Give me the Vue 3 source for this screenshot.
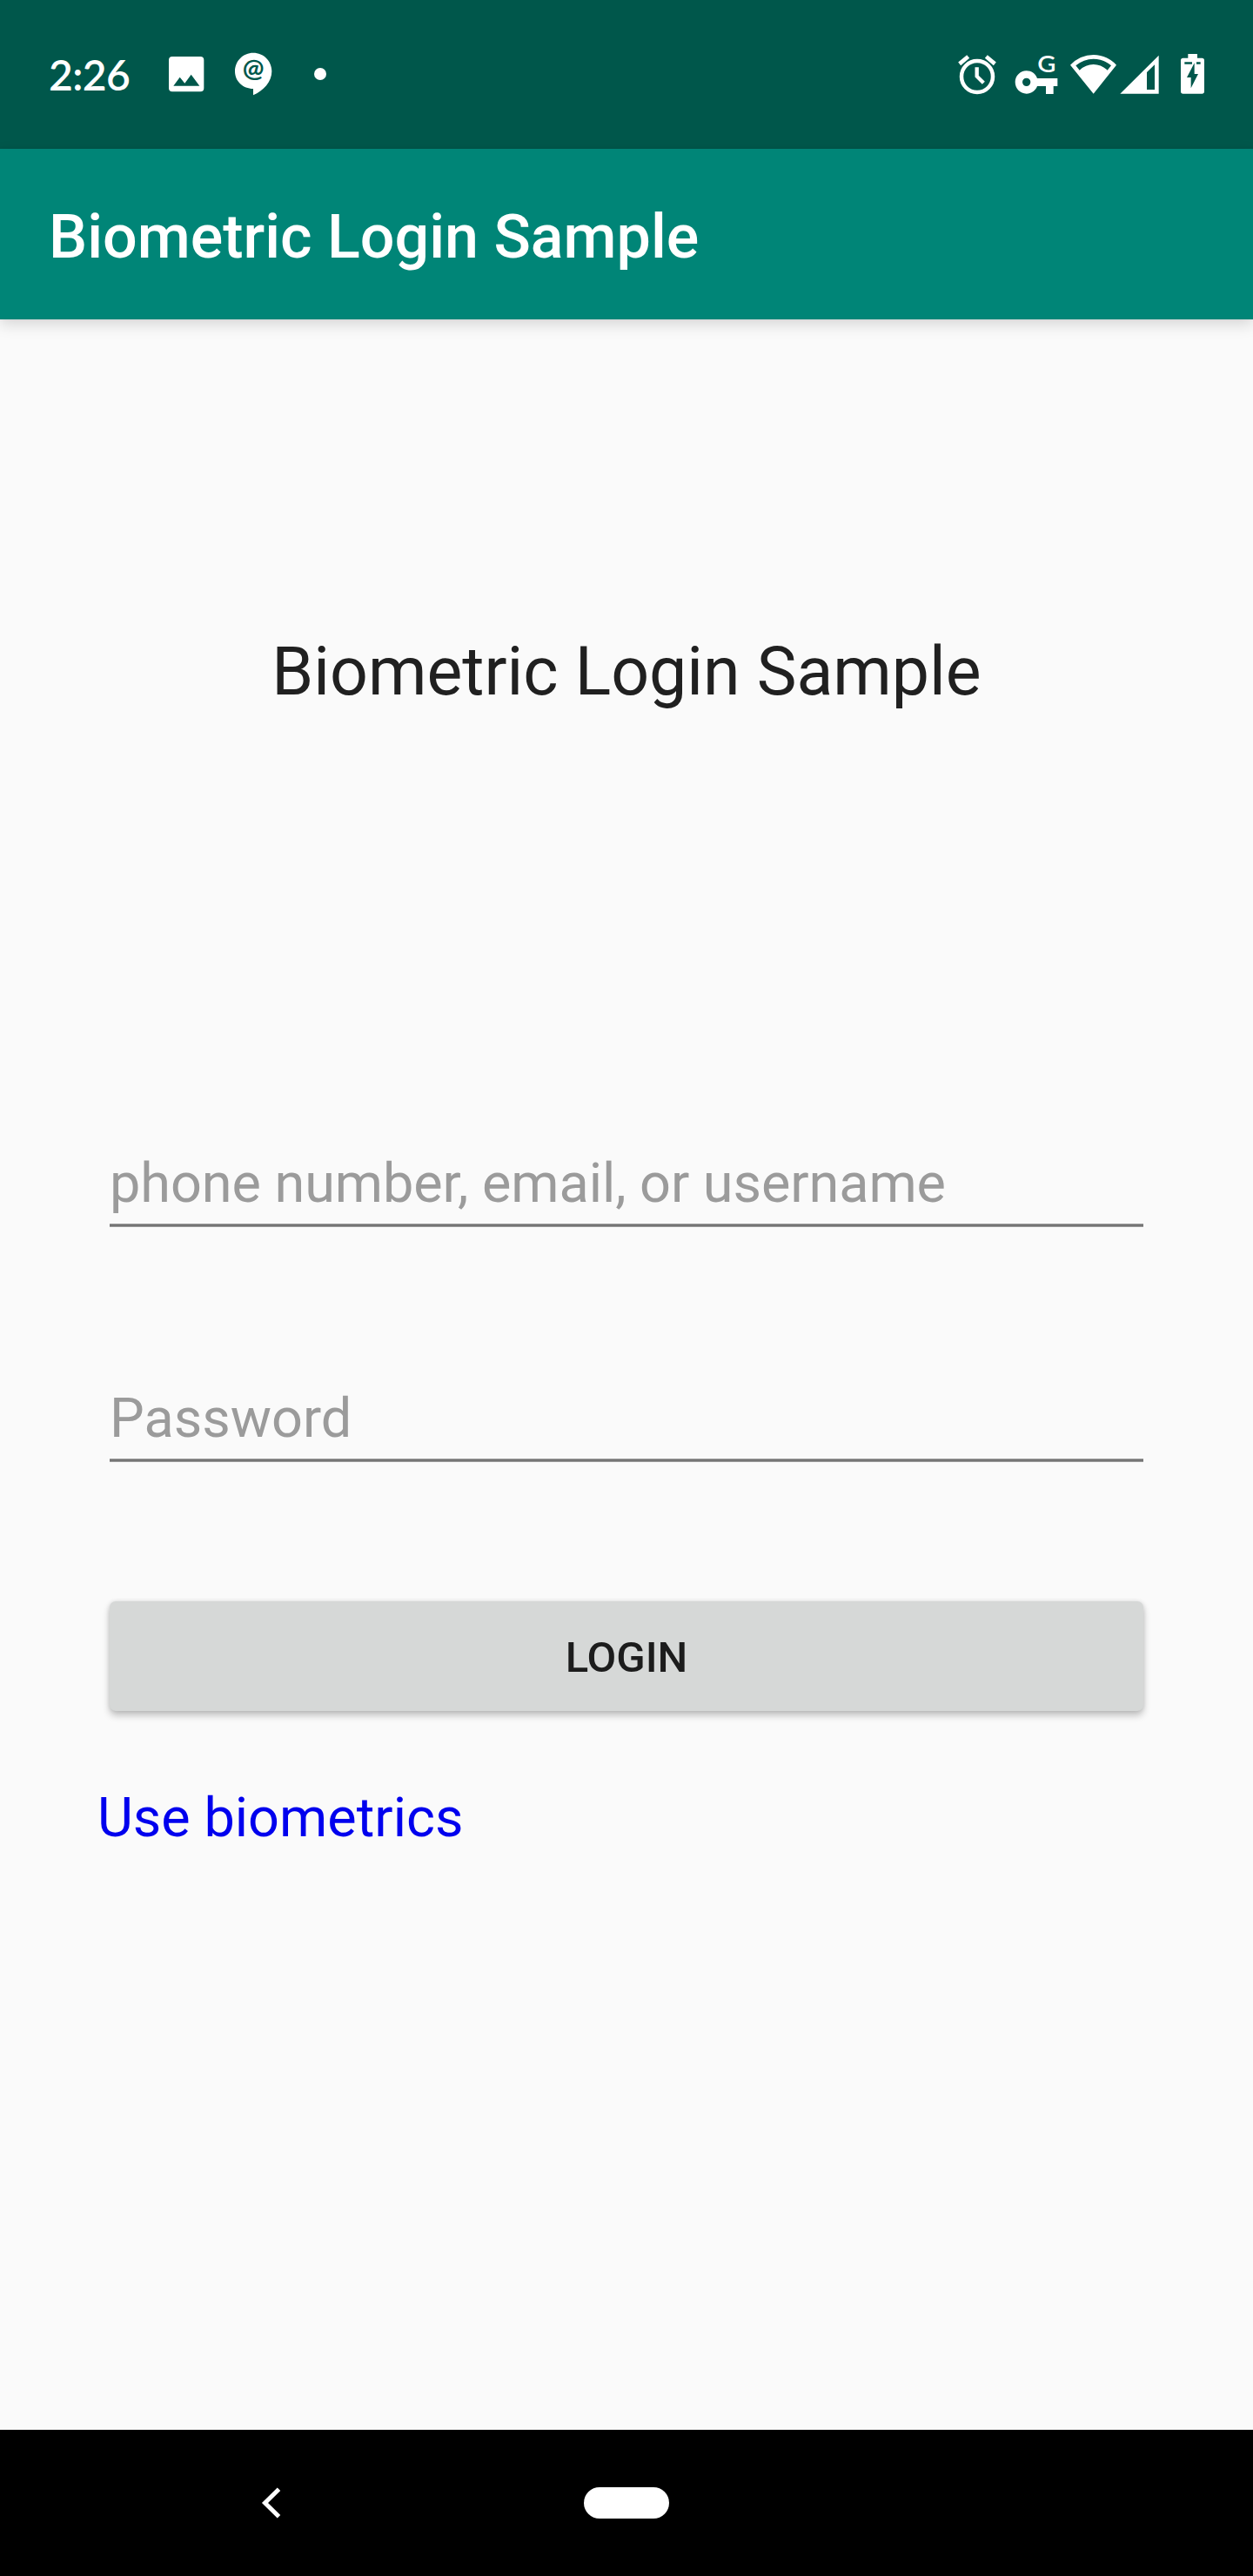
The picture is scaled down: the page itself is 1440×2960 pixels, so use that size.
<script setup>
import { ref } from 'vue'

const username = ref('')
const password = ref('')
</script>

<template>
  <div class="screen">
    <header class="status">
      <div class="left">
        <span class="clock">2:26</span>
        <svg class="photo" width="41" height="41" viewBox="462 75 123 123">
          <path fill="#fff" fill-rule="evenodd" d="M474 75H571Q583 75 583 87V184Q583 196 571 196H474Q462 196 462 184V87Q462 75 474 75ZM478 176H568L539 137L517 167L500 146Z" />
        </svg>
        <svg class="chat" width="44" height="50" viewBox="688 61 132 150">
          <path fill="#fff" d="M754 63C790 63 818 91 818 127C818 162 790 194 754 209V187C719 187 691 161 691 127C691 91 719 63 754 63Z" />
          <text class="at" x="754.5" y="147" text-anchor="middle">@</text>
        </svg>
        <i class="dot"></i>
      </div>
      <div class="right">
        <svg width="290" height="70" viewBox="60 0 870 210">
          <g fill="none" stroke="#fff">
            <circle cx="129" cy="144" r="54" stroke-width="13.5" />
            <path stroke-width="14" d="M68 100L98 75M160 75L190 100" />
            <path stroke-width="13" d="M128 112V143L151 166" />
          </g>
          <path fill="#fff" fill-rule="evenodd" d="M299 124C316 124 330 134 336 150H406V177H392V204H366V177H336C330 193 316 203 299 203C277 203 260 185 260 163C260 142 277 124 299 124ZM299 149A14 14 0 1 0 299 177A14 14 0 1 0 299 149Z" />
          <text class="g" transform="translate(368.5 128) scale(1.05 1)" text-anchor="middle">G</text>
          <path fill="#fff" fill-rule="evenodd" d="M450 104Q484 69 530 69Q575 69 609 104L530 203ZM469 106L482 122Q503 102 530 102Q557 102 578 122L591 106Q563 83 530 83Q496 83 469 106Z" />
          <path fill="#fff" fill-rule="evenodd" d="M622 203L755 71V203ZM714 129V189H741V103Z" />
          <path fill="#fff" fill-rule="evenodd" d="M856 66H888V80H904Q912 80 912 88V195Q912 203 904 203H839Q831 203 831 195V88Q831 80 839 80H856ZM844 94V101H870V94ZM885 94V101H899V94ZM878 97L852 147H866V184L891 135H878Z" />
        </svg>
      </div>
    </header>

    <div class="appbar">Biometric Login Sample</div>

    <main class="content">
      <h1>Biometric Login Sample</h1>
      <form class="form" @submit.prevent>
        <input v-model="username" class="user" type="text" placeholder="phone number, email, or username" />
        <input v-model="password" type="password" placeholder="Password" />
        <button type="submit">LOGIN</button>
      </form>
      <a class="link">Use biometrics</a>
    </main>

    <nav class="navbar">
      <svg class="back" width="24" height="38" viewBox="0 0 24 38">
        <path d="M20.5 3.2L4.5 19L20.5 34.8" fill="none" stroke="#fff" stroke-width="5" />
      </svg>
      <i class="home"></i>
    </nav>
  </div>
</template>

<style>
body {
  margin: 0;
  background: #fafafa;
}
</style>

<style scoped>
.screen {
  width: 1440px;
  height: 2960px;
  display: flex;
  flex-direction: column;
  background: #fafafa;
  font-family: Roboto, sans-serif;
  overflow: hidden;
}
svg {
  display: block;
  flex: none;
  overflow: visible;
}
.status {
  height: 171px;
  flex: none;
  box-sizing: border-box;
  display: flex;
  justify-content: space-between;
  padding: 40px 50px 0 56px;
  background: #00574b;
  color: #fff;
}
.left,
.right {
  display: flex;
}
.left {
  padding-top: 20px;
}
.clock {
  width: 138px;
  font: 600 48px/51px Lato, sans-serif;
  letter-spacing: -0.6px;
}
.photo {
  margin-top: 5px;
}
.chat {
  margin-left: 34px;
}
.at {
  font: 700 88px Lato, sans-serif;
  fill: #00574b;
}
.g {
  font: 600 83px Lato, sans-serif;
  fill: #fff;
}
.dot {
  width: 14px;
  height: 14px;
  margin: 18px 0 0 48px;
  border-radius: 50%;
  background: #fff;
}
.appbar {
  height: 196px;
  flex: none;
  box-sizing: border-box;
  padding: 6px 56px 0;
  background: #008577;
  color: #fff;
  font-size: 70px;
  font-weight: 500;
  line-height: 190px;
  box-shadow: 0 6px 16px rgba(0, 0, 0, 0.14), 0 0 4px rgba(0, 0, 0, 0.06);
}
.content {
  flex: 1;
  display: flex;
  flex-direction: column;
}
h1 {
  margin: 360px 0 0;
  font-size: 77px;
  font-weight: 400;
  line-height: 90px;
  text-align: center;
  color: #202020;
}
.form {
  display: flex;
  flex-direction: column;
  margin: 505px 126px 0;
}
input {
  box-sizing: border-box;
  height: 88px;
  margin: 0 0 182px;
  padding: 0 0 14px;
  border: 0;
  border-radius: 0;
  outline: 0;
  background: linear-gradient(#999 1px, #757575 1px 3px, #999 3px) bottom / 100% 4px no-repeat;
  font: 400 63px/74px Roboto, sans-serif;
  color: #202020;
}
.user {
  letter-spacing: -0.07px;
}
input + input {
  margin-bottom: 160px;
}
input::placeholder {
  color: #9b9b9b;
  opacity: 1;
}
button {
  height: 126px;
  padding: 4px 0 0;
  border: 0;
  border-radius: 7px;
  background: #d6d8d7;
  box-shadow: 0 5px 9px rgba(0, 0, 0, 0.24), 0 0 5px rgba(0, 0, 0, 0.1);
  font: 500 49px/58px Roboto, sans-serif;
  color: #1c1c1c;
}
.link {
  margin: 86px 0 0 112px;
  font-size: 63px;
  line-height: 74px;
  color: #0000ee;
}
.navbar {
  height: 168px;
  flex: none;
  display: flex;
  align-items: center;
  background: #000;
}
.back {
  margin-left: 300px;
}
.home {
  width: 98px;
  height: 36px;
  margin-left: 347px;
  border-radius: 18px;
  background: #fff;
}
</style>
